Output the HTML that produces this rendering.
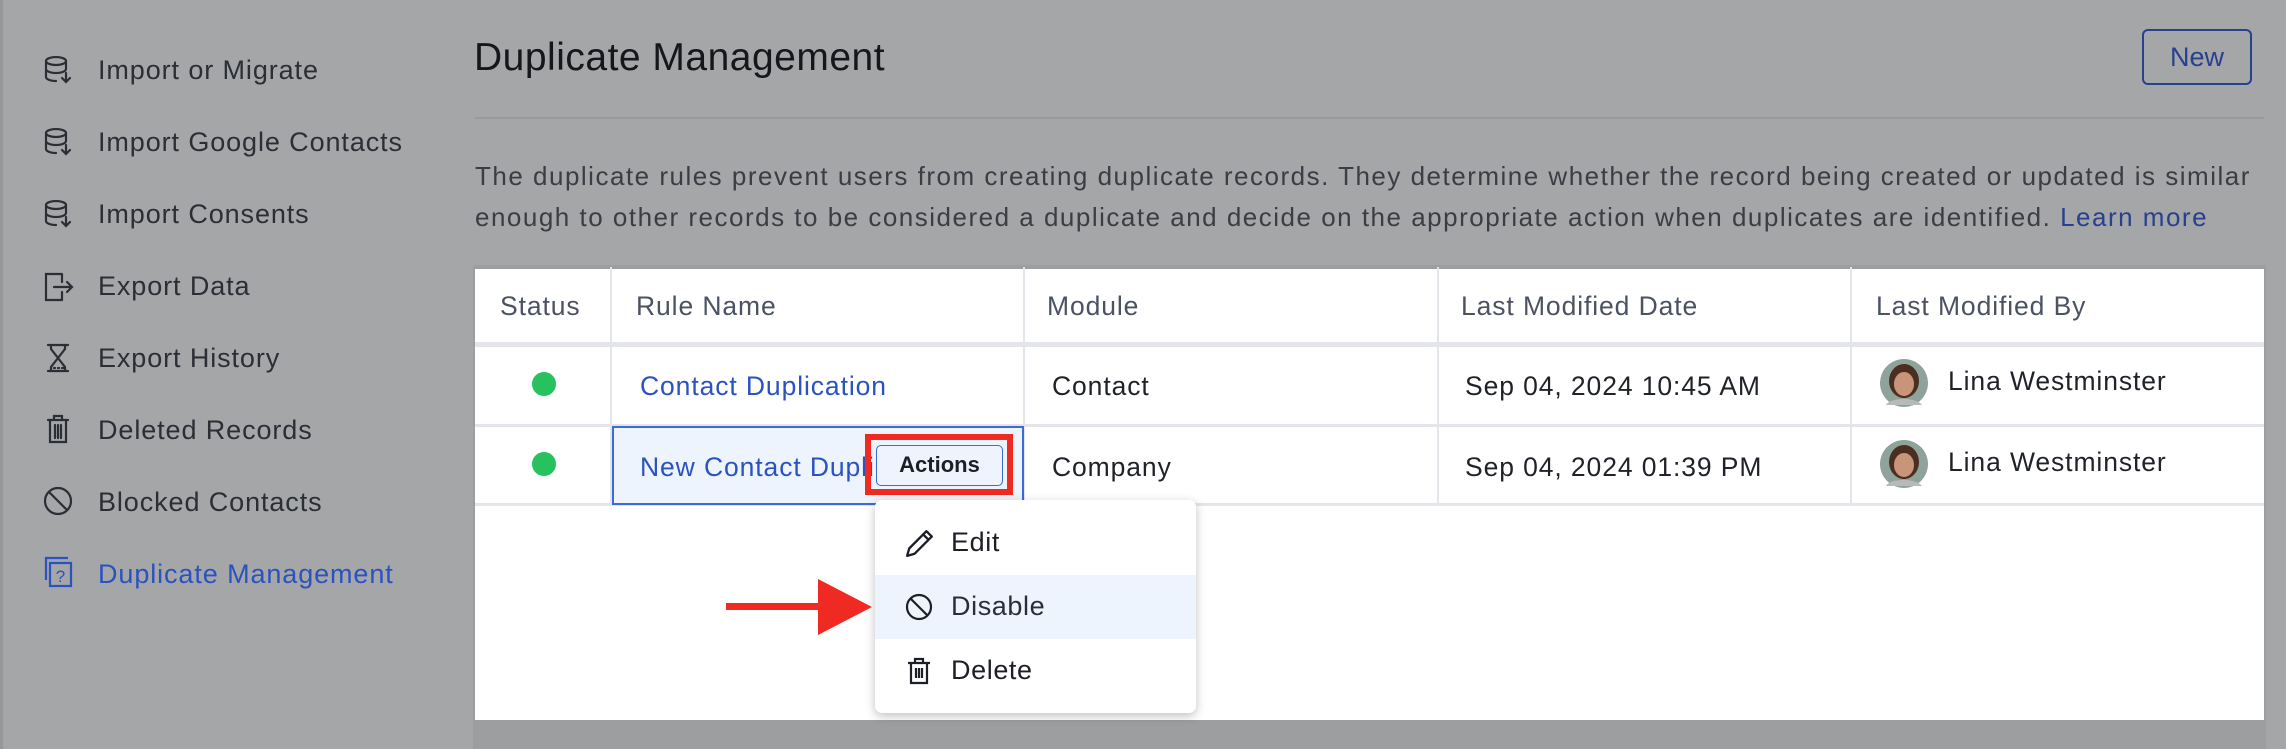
<!DOCTYPE html>
<html><head><meta charset="utf-8">
<style>
*{margin:0;padding:0;box-sizing:border-box}
body{width:2286px;height:749px;overflow:hidden;background:#a5a6a8;font-family:"Liberation Sans",sans-serif;position:relative;color:#2a2d33}
.abs{position:absolute;white-space:nowrap}
.side{left:98px;font-size:27px;letter-spacing:0.9px;color:#2b2e35;line-height:30px}
.ic{position:absolute;left:42px;width:32px;height:32px}
.hd{font-size:26.5px;letter-spacing:0.9px;color:#4b5262;top:291px;line-height:30px}
.cell{font-size:26.5px;letter-spacing:0.9px;line-height:30px;color:#1f2228}
.vl{position:absolute;width:2px;background:#e3e5ea;top:267px;height:238px}
.hl{position:absolute;left:475px;width:1789px;background:#e3e5ea}
.mi{font-size:27px;letter-spacing:0.6px}
</style></head><body>
<div style="position:absolute;left:0;top:0;width:3px;height:749px;background:#96979a"></div>

<svg class="ic" style="top:54px" viewBox="0 0 32 32" fill="none" stroke="#2b2e35" stroke-width="2.2" stroke-linecap="round"><ellipse cx="14" cy="7" rx="10" ry="4"/><path d="M4 7v16c0 2 4 4 10 4M24 7v8M4 15c0 2 4 4 10 4s10-2 10-4M24 19v9M20 24l4 4 4-4"/></svg>
<svg class="ic" style="top:126px" viewBox="0 0 32 32" fill="none" stroke="#2b2e35" stroke-width="2.2" stroke-linecap="round"><ellipse cx="14" cy="7" rx="10" ry="4"/><path d="M4 7v16c0 2 4 4 10 4M24 7v8M4 15c0 2 4 4 10 4s10-2 10-4M24 19v9M20 24l4 4 4-4"/></svg>
<svg class="ic" style="top:198px" viewBox="0 0 32 32" fill="none" stroke="#2b2e35" stroke-width="2.2" stroke-linecap="round"><ellipse cx="14" cy="7" rx="10" ry="4"/><path d="M4 7v16c0 2 4 4 10 4M24 7v8M4 15c0 2 4 4 10 4s10-2 10-4M24 19v9M20 24l4 4 4-4"/></svg>
<svg class="ic" style="top:270px" viewBox="0 0 32 32" fill="none" stroke="#2b2e35" stroke-width="2.2" stroke-linecap="round"><path d="M20 4H4v26h16M20 30V22M20 4v8M12 17h18M25 12l5 5-5 5"/></svg>
<svg class="ic" style="top:342px" viewBox="0 0 32 32" fill="none" stroke="#2b2e35" stroke-width="2.2" stroke-linecap="round"><path d="M6 3h20M6 29h20M9 3v4l7 9-7 9v4M23 3v4l-7 9 7 9v4M12 26h1M16 26h1M20 26h1"/></svg>
<svg class="ic" style="top:413px" viewBox="0 0 32 32" fill="none" stroke="#2b2e35" stroke-width="2.2" stroke-linecap="round"><path d="M6 7h20M12 7V3h8v4M8 7v22h16V7M13 12v13M16 12v13M19 12v13"/></svg>
<svg class="ic" style="top:485px" viewBox="0 0 32 32" fill="none" stroke="#2b2e35" stroke-width="2.2"><circle cx="16" cy="16" r="13"/><path d="M7 7l18 18"/></svg>
<svg class="ic" style="top:556px" viewBox="0 0 32 32" fill="none" stroke="#2a52c0" stroke-width="2.2"><path d="M4 24V2h22"/><rect x="8" y="7" width="21" height="23"/><text x="18.5" y="26" font-size="17" fill="#2a52c0" stroke="none" text-anchor="middle" font-family="Liberation Sans">?</text></svg>

<div class="abs side" style="top:55px">Import or Migrate</div>
<div class="abs side" style="top:127px">Import Google Contacts</div>
<div class="abs side" style="top:199px">Import Consents</div>
<div class="abs side" style="top:271px">Export Data</div>
<div class="abs side" style="top:343px">Export History</div>
<div class="abs side" style="top:415px">Deleted Records</div>
<div class="abs side" style="top:487px">Blocked Contacts</div>
<div class="abs side" style="top:559px;color:#2a52c0">Duplicate Management</div>

<div class="abs" style="left:474px;top:36px;font-size:39px;letter-spacing:0.5px;color:#15171b;line-height:44px">Duplicate Management</div>
<div class="abs" style="left:2142px;top:29px;width:110px;height:56px;border:2px solid #27408f;border-radius:6px;font-size:27px;color:#27408f;text-align:center;line-height:52px">New</div>
<div style="position:absolute;left:475px;top:117px;width:1789px;height:2px;background:#98999c"></div>

<div class="abs" style="left:475px;top:156px;font-size:26px;letter-spacing:1.5px;line-height:41px;color:#3a3d44">The duplicate rules prevent users from creating duplicate records. They determine whether the record being created or updated is similar<br>enough to other records to be considered a duplicate and decide on the appropriate action when duplicates are identified. <span style="color:#27408f">Learn more</span></div>

<div style="position:absolute;left:473px;top:265px;width:1793px;height:484px;background:#9d9ea0"></div>
<div style="position:absolute;left:475px;top:269px;width:1789px;height:451px;background:#fff"></div>
<div class="hl" style="top:342px;height:5px"></div>
<div class="hl" style="top:424px;height:3px"></div>
<div class="hl" style="top:503px;height:3px"></div>
<div class="vl" style="left:610px"></div>
<div class="vl" style="left:1023px"></div>
<div class="vl" style="left:1437px"></div>
<div class="vl" style="left:1850px"></div>

<div class="abs hd" style="left:500px">Status</div>
<div class="abs hd" style="left:636px">Rule Name</div>
<div class="abs hd" style="left:1047px">Module</div>
<div class="abs hd" style="left:1461px">Last Modified Date</div>
<div class="abs hd" style="left:1876px">Last Modified By</div>

<div style="position:absolute;left:532px;top:372px;width:24px;height:24px;border-radius:50%;background:#27c15f"></div>
<div style="position:absolute;left:532px;top:452px;width:24px;height:24px;border-radius:50%;background:#27c15f"></div>

<div class="abs cell" style="left:640px;top:371px;color:#2a52c0">Contact Duplication</div>
<div class="abs cell" style="left:1052px;top:371px">Contact</div>
<div class="abs cell" style="left:1465px;top:371px">Sep 04, 2024 10:45 AM</div>
<div class="abs cell" style="left:1948px;top:366px">Lina Westminster</div>

<div style="position:absolute;left:612px;top:426px;width:412px;height:79px;background:#eef4fe;border:2px solid #3a6bd6"></div>
<div class="abs cell" style="left:640px;top:452px;color:#2a52c0;width:234px;overflow:hidden">New Contact Duplication</div>
<div style="position:absolute;left:865px;top:434px;width:148px;height:61px;border:6px solid #ef2a22"></div>
<div class="abs" style="left:876px;top:445px;width:127px;height:41px;border:1.5px solid #3a6bd6;border-radius:5px;background:#eef3fd;font-size:22px;font-weight:bold;color:#1c1f25;text-align:center;line-height:38px">Actions</div>
<div class="abs cell" style="left:1052px;top:452px">Company</div>
<div class="abs cell" style="left:1465px;top:452px">Sep 04, 2024 01:39 PM</div>
<div class="abs cell" style="left:1948px;top:447px">Lina Westminster</div>

<svg style="position:absolute;left:1880px;top:359px" width="48" height="48"><circle cx="24" cy="24" r="24" fill="#8fa39b"/><ellipse cx="24" cy="22" rx="15" ry="17" fill="#4a2e22"/><ellipse cx="24" cy="25" rx="10" ry="12" fill="#c9957a"/><path d="M6 46c4-8 30-8 36 0" fill="#b9b9b9"/></svg>
<svg style="position:absolute;left:1880px;top:440px" width="48" height="48"><circle cx="24" cy="24" r="24" fill="#8fa39b"/><ellipse cx="24" cy="22" rx="15" ry="17" fill="#4a2e22"/><ellipse cx="24" cy="25" rx="10" ry="12" fill="#c9957a"/><path d="M6 46c4-8 30-8 36 0" fill="#b9b9b9"/></svg>

<div style="position:absolute;left:875px;top:500px;width:321px;height:213px;background:#fff;border-radius:7px;box-shadow:0 3px 10px rgba(0,0,0,.25);overflow:hidden">
 <div style="position:absolute;left:0;top:75px;width:321px;height:64px;background:#eef4fe"></div>
</div>
<svg style="position:absolute;left:905px;top:528px" width="30" height="30" viewBox="0 0 28 28" fill="none" stroke="#1c1f25" stroke-width="2.2" stroke-linejoin="round"><path d="M2 26l2-7L20 3l5 5L9 24z M17 6l5 5"/></svg>
<div class="abs mi" style="left:951px;top:527px;color:#1c1f25">Edit</div>
<svg style="position:absolute;left:905px;top:593px" width="28" height="28" viewBox="0 0 28 28" fill="none" stroke="#1c1f25" stroke-width="2.2"><circle cx="14" cy="14" r="12"/><path d="M6 6l16 16"/></svg>
<div class="abs mi" style="left:951px;top:591px;color:#2a2e38">Disable</div>
<svg style="position:absolute;left:905px;top:657px" width="28" height="28" viewBox="0 0 28 28" fill="none" stroke="#1c1f25" stroke-width="2.2"><path d="M3 6h22M10 6V2h8v4M6 6v20h16V6M11 11v10M14 11v10M17 11v10"/></svg>
<div class="abs mi" style="left:951px;top:655px;color:#1c1f25">Delete</div>

<svg style="position:absolute;left:724px;top:577px" width="150" height="60"><rect x="2" y="26" width="98" height="7" fill="#ef2a22"/><polygon points="94,2 148,30 94,58" fill="#ef2a22"/></svg>
</body></html>
